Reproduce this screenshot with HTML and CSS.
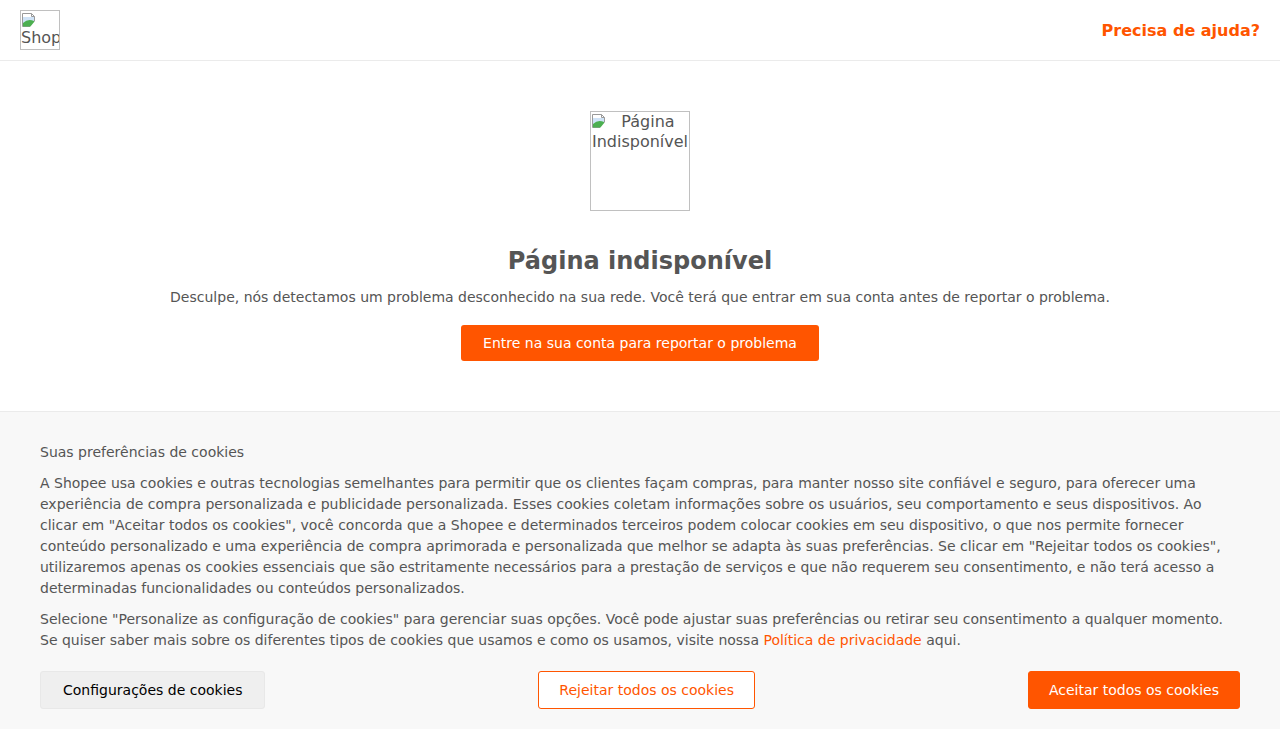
FILE: index.html
```html
<!DOCTYPE html>
<html lang="pt-BR">
<head>
<meta charset="utf-8">
<title>Página indisponível</title>
<link rel="stylesheet" href="styles.css">
</head>
<body>
<header class="header">
  <div class="logo-box broken">
    <svg class="broken-icon" width="16" height="16" viewBox="0 0 16 16"><path d="M1.5 1.5h9l3 3v10h-12z" fill="#fff" stroke="#9a9a9a"/><path d="M10.5 1.5v3h3" fill="none" stroke="#9a9a9a"/><rect x="2" y="5" width="11" height="6" fill="#cfe3f7"/><path d="M2 14.5 2 11 Q7 6 13 9 V14.5z" fill="#4caf50"/><path d="M9 15 L14 9 V15z" fill="#fff"/></svg>
    <span class="alt">Shopee</span>
  </div>
  <a class="help" href="#">Precisa de ajuda?</a>
</header>
<main class="main">
  <div class="page-img broken">
    <svg class="broken-icon" width="16" height="16" viewBox="0 0 16 16"><path d="M1.5 1.5h9l3 3v10h-12z" fill="#fff" stroke="#9a9a9a"/><path d="M10.5 1.5v3h3" fill="none" stroke="#9a9a9a"/><rect x="2" y="5" width="11" height="6" fill="#cfe3f7"/><path d="M2 14.5 2 11 Q7 6 13 9 V14.5z" fill="#4caf50"/><path d="M9 15 L14 9 V15z" fill="#fff"/></svg>
    <span class="alt">Página Indisponível</span>
  </div>
  <h1 class="title">Página indisponível</h1>
  <p class="desc">Desculpe, nós detectamos um problema desconhecido na sua rede. Você terá que entrar em sua conta antes de reportar o problema.</p>
  <button class="btn-primary">Entre na sua conta para reportar o problema</button>
</main>
<section class="cookies">
  <div class="cookie-title">Suas preferências de cookies</div>
  <p class="cookie-text">A Shopee usa cookies e outras tecnologias semelhantes para permitir que os clientes façam compras, para manter nosso site confiável e seguro, para oferecer uma experiência de compra personalizada e publicidade personalizada. Esses cookies coletam informações sobre os usuários, seu comportamento e seus dispositivos. Ao clicar em "Aceitar todos os cookies", você concorda que a Shopee e determinados terceiros podem colocar cookies em seu dispositivo, o que nos permite fornecer conteúdo personalizado e uma experiência de compra aprimorada e personalizada que melhor se adapta às suas preferências. Se clicar em "Rejeitar todos os cookies", utilizaremos apenas os cookies essenciais que são estritamente necessários para a prestação de serviços e que não requerem seu consentimento, e não terá acesso a determinadas funcionalidades ou conteúdos personalizados.</p>
  <p class="cookie-text">Selecione "Personalize as configuração de cookies" para gerenciar suas opções. Você pode ajustar suas preferências ou retirar seu consentimento a qualquer momento. Se quiser saber mais sobre os diferentes tipos de cookies que usamos e como os usamos, visite nossa <a class="link" href="#">Política de privacidade</a> aqui.</p>
  <div class="cookie-actions">
    <button class="btn-cfg">Configurações de cookies</button>
    <button class="btn-reject">Rejeitar todos os cookies</button>
    <button class="btn-accept">Aceitar todos os cookies</button>
  </div>
</section>
</body>
</html>
```
FILE: styles.css
```css
* { box-sizing: border-box; }
html, body { margin: 0; padding: 0; }
body {
  font-family: "DejaVu Sans", sans-serif;
  color: #555;
  background: #fff;
}
.header {
  height: 61px;
  padding: 10px 20px;
  border-bottom: 1px solid #ebebeb;
  display: flex;
  justify-content: space-between;
  align-items: center;
}
.broken {
  border: 1px solid #c0c0c0;
  overflow: hidden;
  font-size: 16px;
  line-height: 20px;
  color: #555;
}
.broken-icon { float: left; margin: 1px 0 0 0; }
.logo-box {
  width: 40px;
  height: 40px;
  align-self: flex-start;
  text-align: left;
  line-height: 19px;
}
.logo-box .alt { white-space: nowrap; display: inline-block; }
.help {
  color: #f50;
  font-weight: bold;
  font-size: 16px;
  text-decoration: none;
}
.main {
  display: flex;
  flex-direction: column;
  align-items: center;
  padding: 50px 20px 50px;
}
.page-img {
  width: 100px;
  height: 100px;
  text-align: center;
}
.title {
  margin: 34px 0 0;
  font-size: 24px;
  line-height: 32px;
  font-weight: bold;
  color: #555;
}
.desc {
  margin: 10px 0 0;
  font-size: 14px;
  line-height: 20px;
}
.btn-primary {
  margin-top: 18px;
  height: 36px;
  padding: 0 22px;
  background: #f50;
  color: #fff;
  border: none;
  border-radius: 3px;
  font-family: "DejaVu Sans", sans-serif;
  font-size: 14px;
}
.cookies {
  border-top: 1px solid #ebebeb;
  background: #f8f8f8;
  padding: 30px 40px 20px;
  font-size: 14px;
  line-height: 21px;
  color: #555;
}
.cookie-title { margin: 0; }
.cookie-text { margin: 10px 0 0; }
.link { color: #f50; text-decoration: none; }
.cookie-actions {
  margin-top: 20px;
  display: flex;
  justify-content: space-between;
}
.cookie-actions button {
  height: 38px;
  padding: 0 20px;
  border-radius: 3px;
  font-family: "DejaVu Sans", sans-serif;
  font-size: 14px;
}
.btn-cfg {
  background: #efefef;
  border: 1px solid #e8e8e8;
  color: #000;
  padding: 0 22px !important;
}
.btn-reject {
  background: #fff;
  border: 1px solid #f50;
  color: #f50;
}
.btn-accept {
  background: #f50;
  border: 1px solid #f50;
  color: #fff;
}
```
